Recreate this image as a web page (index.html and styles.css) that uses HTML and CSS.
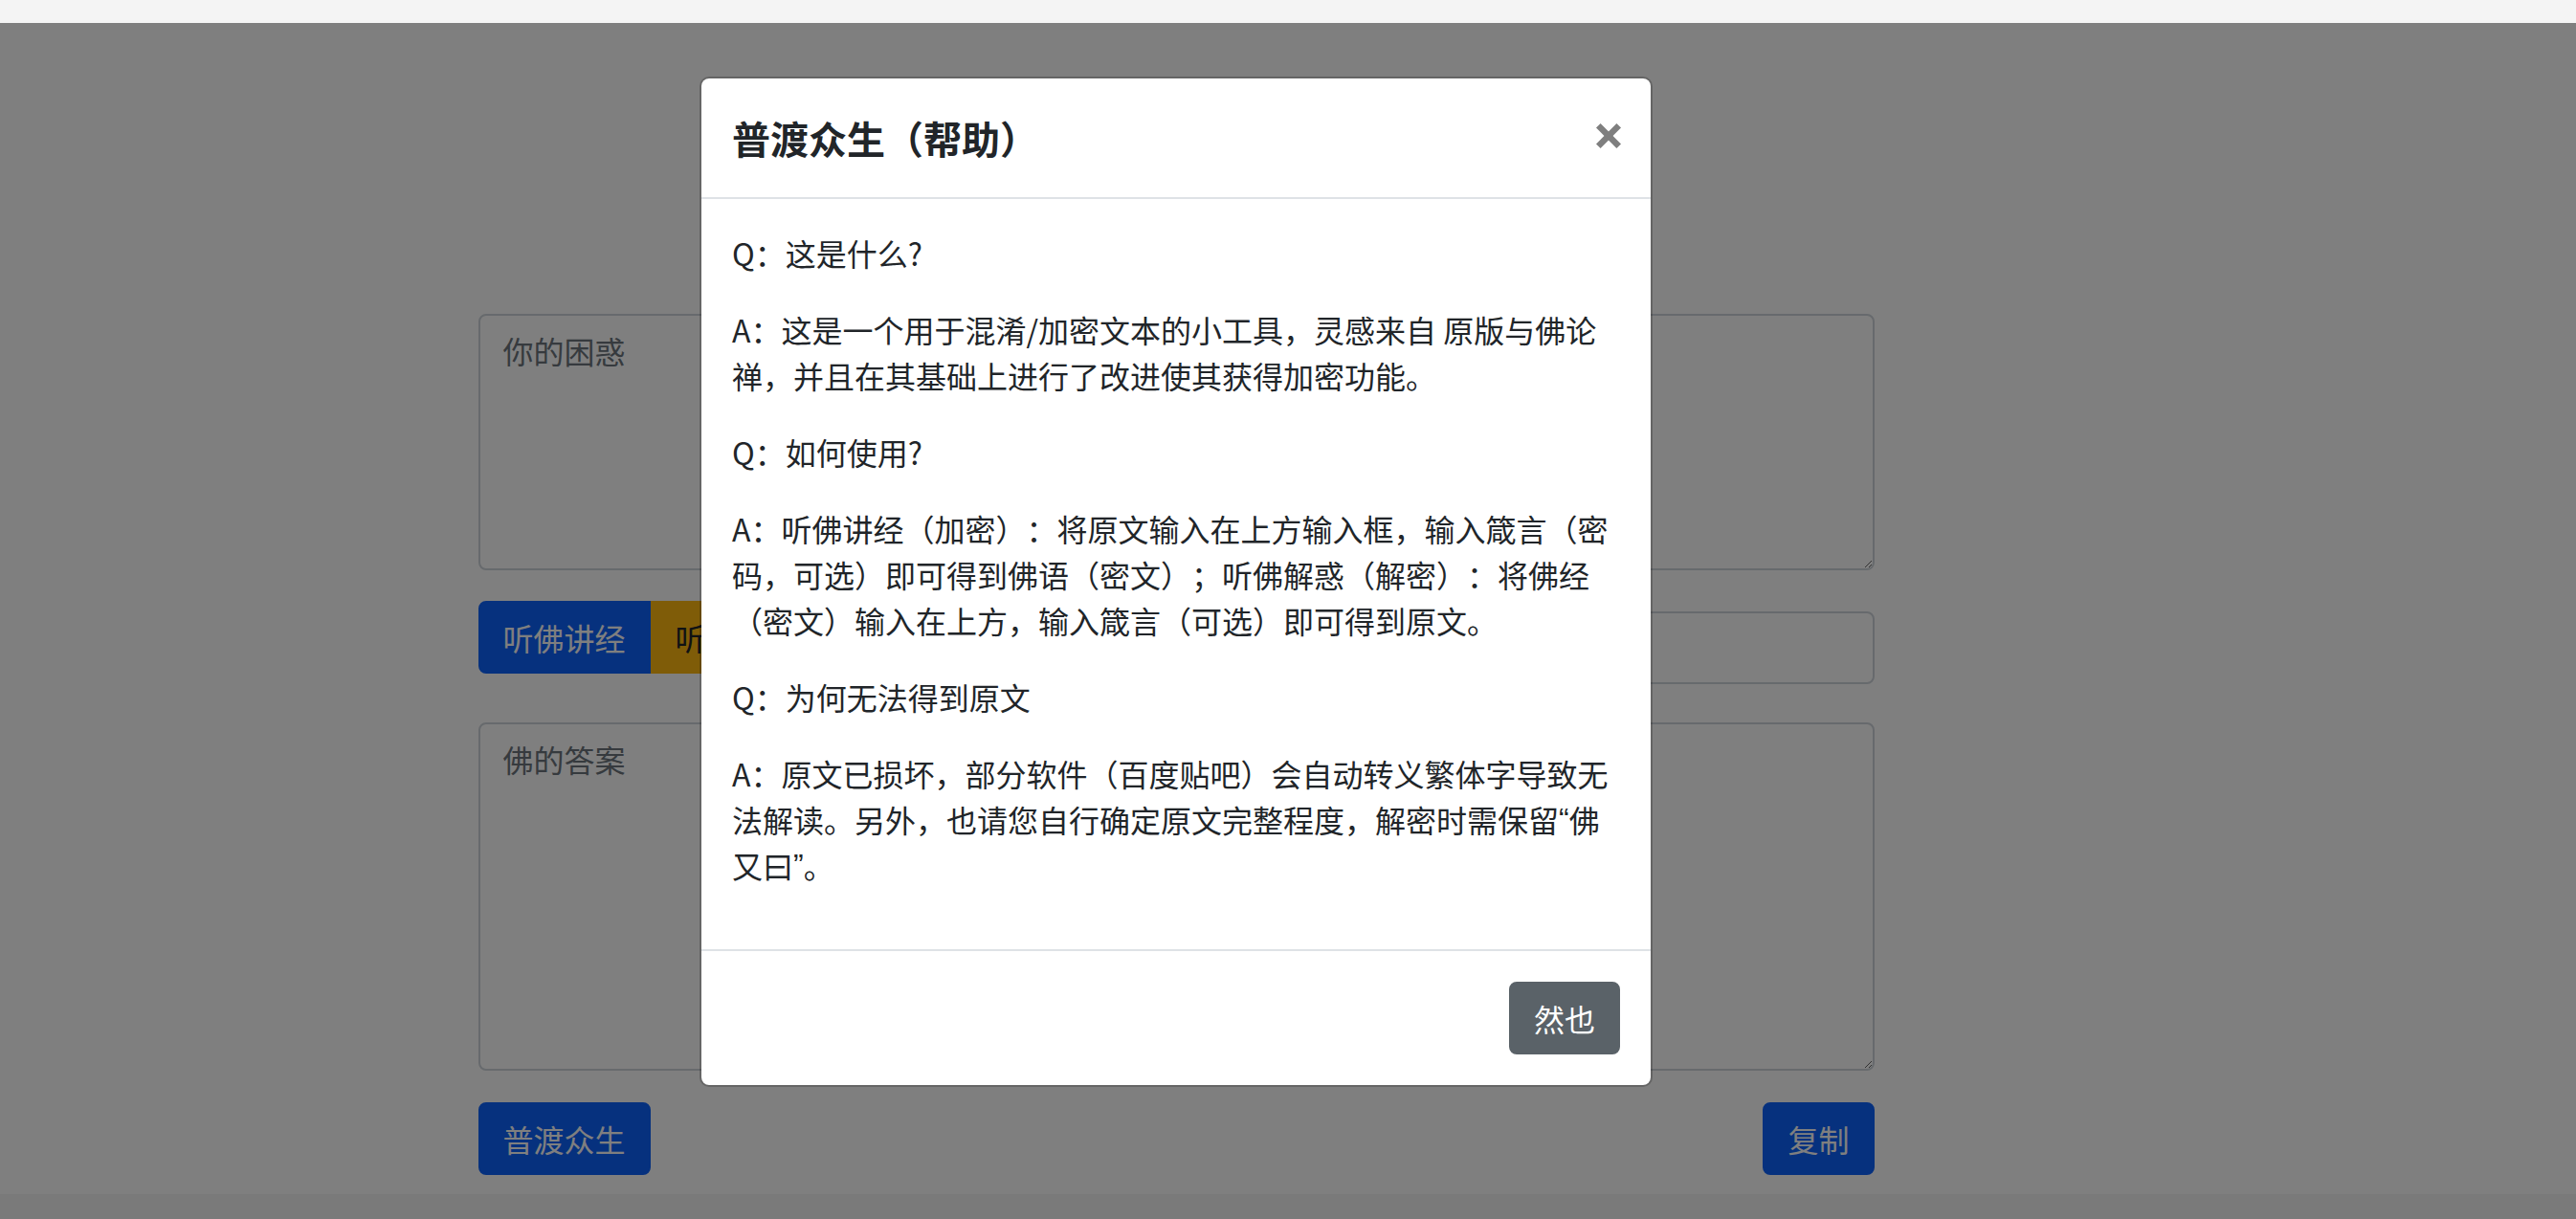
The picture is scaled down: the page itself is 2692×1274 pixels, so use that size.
FILE: index.html
```html
<!DOCTYPE html>
<html lang="zh-CN">
<head>
<meta charset="utf-8">
<title>普渡众生</title>
<link rel="stylesheet" href="styles.css">
</head>
<body>
  <div class="topbar"></div>
  <div class="viewport">
    <main class="page">
      <div class="container">
        <textarea class="form-control area-in" placeholder="你的困惑"></textarea>
        <div class="action-row">
          <div class="btn-group">
            <button class="btn btn-primary">听佛讲经</button>
            <button class="btn btn-warning">听佛解惑</button>
          </div>
          <input class="form-control key" type="text" placeholder="箴言（可选）">
        </div>
        <textarea class="form-control area-out" placeholder="佛的答案"></textarea>
        <div class="bottom-row">
          <button class="btn btn-primary">普渡众生</button>
          <button class="btn btn-primary">复制</button>
        </div>
      </div>
      <footer class="footer"></footer>
    </main>
    <div class="backdrop"></div>
    <div class="modal-layer">
      <div class="modal">
        <div class="modal-header">
          <h5 class="modal-title">普渡众生（帮助）</h5>
          <button class="close" type="button" aria-label="Close">
            <svg class="close-icon" viewBox="0 0 26 26" width="26" height="26" aria-hidden="true">
              <line x1="2.3" y1="2.3" x2="23.7" y2="23.7"/>
              <line x1="23.7" y1="2.3" x2="2.3" y2="23.7"/>
            </svg>
          </button>
        </div>
        <div class="modal-body">
          <p>Q：这是什么?</p>
          <p>A：这是一个用于混淆/加密文本的小工具，灵感来自 原版与佛论<br>禅，并且在其基础上进行了改进使其获得加密功能。</p>
          <p>Q：如何使用?</p>
          <p>A：听佛讲经（加密）：将原文输入在上方输入框，输入箴言（密<br>码，可选）即可得到佛语（密文）；听佛解惑（解密）：将佛经<br>（密文）输入在上方，输入箴言（可选）即可得到原文。</p>
          <p>Q：为何无法得到原文</p>
          <p>A：原文已损坏，部分软件（百度贴吧）会自动转义繁体字导致无<br>法解读。另外，也请您自行确定原文完整程度，解密时需保留<span class="latin">“</span>佛<br>又曰<span class="latin">”</span>。</p>
        </div>
        <div class="modal-footer">
          <button class="btn btn-secondary">然也</button>
        </div>
      </div>
    </div>
  </div>
</body>
</html>
```

FILE: styles.css
```css
* {
  box-sizing: border-box;
}

html, body {
  margin: 0;
  padding: 0;
}

body {
  width: 2692px;
  height: 1274px;
  overflow: hidden;
  background: #fff;
  color: #212529;
  font-family: "Noto Sans CJK SC", "Noto Sans", sans-serif;
  font-size: 32px;
  line-height: 48px;
  text-spacing-trim: space-all;
}

.topbar {
  height: 24px;
  background: #f4f4f4;
}

.viewport {
  position: relative;
  height: 1250px;
  overflow: hidden;
}

.page {
  width: 2458px;
  height: 1250px;
  display: flex;
  flex-direction: column;
}

.container {
  width: 1459px;
  margin: 0 auto;
  padding-top: 304px;
  display: flex;
  flex-direction: column;
}

.form-control {
  display: block;
  width: 100%;
  padding: 12px 24px;
  font-family: inherit;
  font-size: 32px;
  line-height: 48px;
  color: #495057;
  background: #fff;
  border: 2px solid #ced4da;
  border-radius: 8px;
  margin: 0;
}

.form-control::placeholder {
  color: #6c757d;
  opacity: 1;
}

.area-in {
  height: 268px;
}

.area-out {
  height: 364px;
  margin-top: 40px;
}

.action-row {
  display: flex;
  align-items: flex-start;
  gap: 24px;
  margin-top: 32px;
}

.btn-group {
  display: flex;
  flex: none;
}

.btn-group .btn:first-child {
  border-top-right-radius: 0;
  border-bottom-right-radius: 0;
}

.btn-group .btn:last-child {
  border-top-left-radius: 0;
  border-bottom-left-radius: 0;
}

.key {
  flex: 1;
  height: 76px;
  margin-top: 11px;
}

.bottom-row {
  display: flex;
  justify-content: space-between;
  margin-top: 33px;
}

.btn {
  display: inline-block;
  font-family: inherit;
  font-size: 32px;
  font-weight: 400;
  line-height: 48px;
  padding: 12px 24px;
  border: 2px solid transparent;
  border-radius: 8px;
  cursor: pointer;
  margin: 0;
}

.btn-primary {
  color: #fff;
  background: #0c62fd;
  border-color: #0c62fd;
}

.btn-warning {
  color: #212529;
  background: #ffb810;
  border-color: #ffb810;
}

.btn-secondary {
  color: #fff;
  background: #5a6268;
  border-color: #5a6268;
}

.footer {
  margin-top: auto;
  height: 26px;
  background: #f4f4f4;
  width: 2692px;
}

.backdrop {
  position: absolute;
  inset: 0;
  background: rgba(0, 0, 0, 0.5);
}

.modal-layer {
  position: absolute;
  inset: 0;
  width: 2458px;
  padding-top: 56px;
}

.modal {
  width: 996px;
  margin: 0 auto;
  background: #fff;
  background-clip: padding-box;
  border: 2px solid rgba(0, 0, 0, 0.2);
  border-radius: 10px;
  display: flex;
  flex-direction: column;
}

.modal-header {
  display: flex;
  align-items: flex-start;
  justify-content: space-between;
  padding: 32px;
  border-bottom: 2px solid #dee2e6;
}

.modal-title {
  margin: 0;
  font-size: 40px;
  line-height: 60px;
  font-weight: 700;
  color: #212529;
}

.close {
  display: block;
  width: 26px;
  height: 26px;
  padding: 0;
  margin: 15px -1px 0 auto;
  border: 0;
  background: transparent;
  cursor: pointer;
}

.close-icon {
  display: block;
}

.close-icon line {
  stroke: #7f7f7f;
  stroke-width: 6.5;
  stroke-linecap: butt;
}

.modal-body {
  padding: 32px;
}

.modal-body p {
  margin: 0 0 32px;
  font-size: 32px;
  line-height: 48px;
}

.latin {
  font-family: "Liberation Sans", sans-serif;
  line-height: 48px;
  vertical-align: top;
}

.modal-footer {
  display: flex;
  justify-content: flex-end;
  padding: 24px;
  border-top: 2px solid #dee2e6;
}

.modal-footer .btn {
  margin: 8px;
}
```
